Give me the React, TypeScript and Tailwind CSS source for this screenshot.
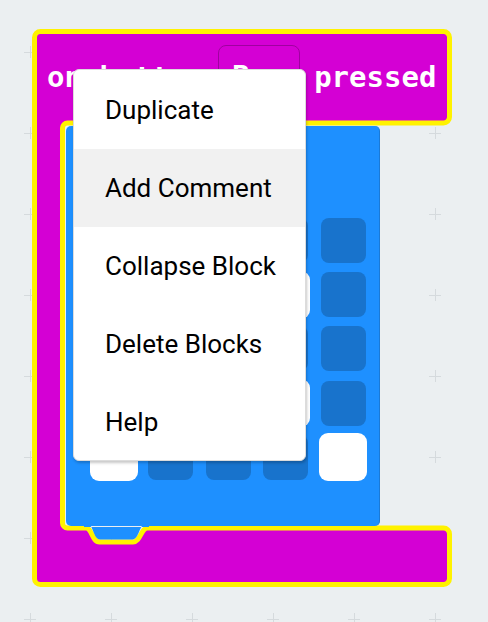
import React from "react";

const LED: number[][] = [
  [0, 0, 0, 0, 0],
  [0, 1, 0, 1, 0],
  [0, 0, 0, 0, 0],
  [0, 1, 1, 1, 0],
  [1, 0, 0, 0, 1],
];

const MENU = ["Duplicate", "Add Comment", "Collapse Block", "Delete Blocks", "Help"];

function GridCrosses() {
  const xs = [30, 111, 192, 273, 354, 435];
  const ys = [52, 133, 214, 295, 376, 457, 538, 619];
  return (
    <svg className="absolute inset-0" width={488} height={622} viewBox="0 0 488 622">
      {xs.map((x) =>
        ys.map((y) => (
          <g key={`${x}-${y}`} stroke="#d5dadd" strokeWidth={1}>
            <line x1={x - 6} y1={y + 0.5} x2={x + 6} y2={y + 0.5} />
            <line x1={x + 0.5} y1={y - 6} x2={x + 0.5} y2={y + 6} />
          </g>
        ))
      )}
    </svg>
  );
}

function BlockShape() {
  const d = [
    "M 40.5 31.5",
    "H 443.5",
    "A 6 6 0 0 1 449.5 37.5",
    "V 117",
    "A 6 6 0 0 1 443.5 123",
    "H 67.5",
    "A 5 5 0 0 0 62.5 128",
    "V 523",
    "A 5 5 0 0 0 67.5 528",
    "H 86",
    "C 92 528 92 542 99.5 542",
    "H 133",
    "C 140.5 542 141 528 147.5 528",
    "H 443.5",
    "A 6 6 0 0 1 449.5 534",
    "V 578.5",
    "A 6 6 0 0 1 443.5 584.5",
    "H 40.5",
    "A 6 6 0 0 1 34.5 578.5",
    "V 37.5",
    "A 6 6 0 0 1 40.5 31.5",
    "Z",
  ].join(" ");
  return (
    <svg className="absolute inset-0" width={420} height={558} viewBox="32 29 420 558">
      <path d={d} fill="#d400d4" stroke="#fff200" strokeWidth={5} strokeLinejoin="round" />
      <path
        d="M 84 524 H 88 C 93 524 93.5 539.5 100 539.5 H 132.5 C 139 539.5 139.5 524 145 524 H 149 V 527 H 84 Z"
        fill="#1e90ff"
      />
    </svg>
  );
}

export default function App() {
  return (
    <div className="relative w-[488px] h-[622px] overflow-hidden bg-[#ebeff1]">
      <GridCrosses />

      {/* block on the workspace canvas */}
      <div className="absolute left-[32px] top-[29px] w-[420px] h-[558px]">
        <BlockShape />
        <div className="relative flex flex-col font-['DejaVu_Sans_Mono',monospace] font-bold text-white text-[29px] leading-[29px]">
          <div className="h-[97px] flex items-start pl-[15px]">
            <span className="mt-[34px] whitespace-pre">on button</span>
            <div className="ml-[14px] mt-[16px] h-[64px] w-[82px] rounded-[8px] border border-[#a000a0] pl-[13px] pt-[16px] flex items-start gap-[8px]">
              <span>B</span>
              <svg width="18" height="12" viewBox="0 0 18 12" className="mt-[9px]">
                <path d="M2 2 L9 10 L16 2 Z" fill="#ffffff" />
              </svg>
            </div>
            <span className="ml-[14px] mt-[34px]">pressed</span>
          </div>
          <div className="flex pl-[34px]">
            <div className="w-[314px] h-[400px] rounded-[5px] bg-[#1e90ff] border-r border-[#1a7ad8] pt-[92px] pl-[25px]">
              <div className="grid grid-cols-[repeat(5,45px)] grid-rows-[repeat(5,45px)] gap-x-[12.4px] gap-y-[9.2px]">
                {LED.flatMap((row, r) =>
                  row.map((on, c) =>
                    on ? (
                      <div key={`${r}-${c}`} className="-m-[1.5px] w-[48px] h-[48px] rounded-[9px] bg-white" />
                    ) : (
                      <div key={`${r}-${c}`} className="w-[45px] h-[45px] rounded-[8px] bg-[#1873cc]" />
                    )
                  )
                )}
              </div>
            </div>
          </div>
        </div>
      </div>

      {/* context menu overlay */}
      <div className="absolute left-[73px] top-[69px] w-[233px] h-[392px] bg-white rounded-[6px] border border-[#dcdcdc] shadow-[1px_2px_3px_rgba(0,0,0,0.22)] pt-[1px] overflow-hidden font-['Roboto',sans-serif] text-[26px] text-black">
        {MENU.map((label, i) => (
          <div
            key={label}
            className={`h-[78px] flex items-center pl-[31px] ${i === 1 ? "bg-[#f1f1f1]" : ""}`}
          >
            {label}
          </div>
        ))}
      </div>
    </div>
  );
}
